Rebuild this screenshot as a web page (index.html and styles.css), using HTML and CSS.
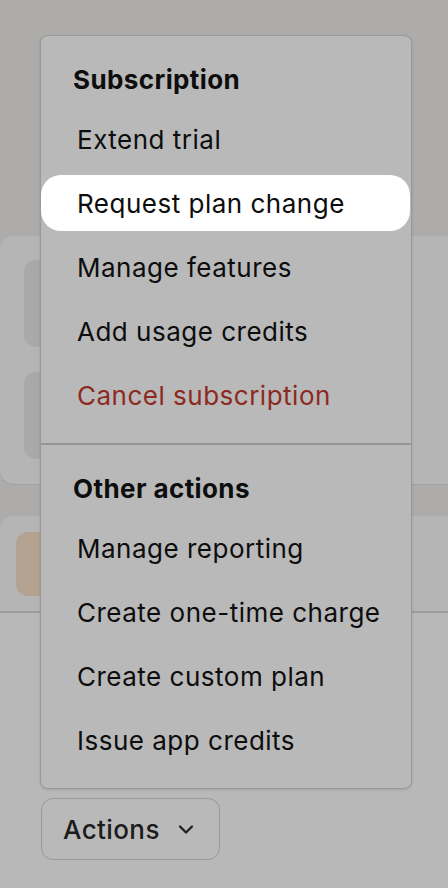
FILE: index.html
```html
<!DOCTYPE html>
<html>
  <head>
    <meta name="viewport" content="width=device-width, initial-scale=1.0">
    <title>Subscription actions</title>
    <link rel="stylesheet" href="styles.css">
  </head>
  <body>
    <div class="page">
      <div class="top-area"></div>

      <section class="card card-plan">
        <div class="block"></div>
        <div class="block"></div>
      </section>

      <section class="card card-notice">
        <div class="notice"></div>
      </section>

      <footer class="footer">
        <div class="actions">
          <div class="menu">
            <div class="menu-section">
              <p class="menu-heading">Subscription</p>
              <ul>
                <li class="menu-item">Extend trial</li>
                <li class="menu-item active">Request plan change</li>
                <li class="menu-item">Manage features</li>
                <li class="menu-item">Add usage credits</li>
                <li class="menu-item danger">Cancel subscription</li>
              </ul>
            </div>
            <div class="menu-section">
              <p class="menu-heading">Other actions</p>
              <ul>
                <li class="menu-item">Manage reporting</li>
                <li class="menu-item">Create one-time charge</li>
                <li class="menu-item">Create custom plan</li>
                <li class="menu-item">Issue app credits</li>
              </ul>
            </div>
          </div>
          <button class="actions-button">
            Actions
            <svg width="20" height="20" viewBox="0 0 20 20">
              <path d="M4 7.5l6 6 6-6" fill="none" stroke="#1c1c1c" stroke-width="2.2" stroke-linecap="round" stroke-linejoin="round"/>
            </svg>
          </button>
        </div>
      </footer>
    </div>
  </body>
</html>
```

FILE: styles.css
```css
body {
  margin: 0;
  padding: 0;
  background-color: #adacaa;
  font-family: Inter, "Noto Sans", sans-serif;
  overflow: hidden;
}
.page {
  width: 448px;
  height: 888px;
  overflow: hidden;
}
.top-area {
  height: 236px;
}
.card {
  background-color: #b5b5b5;
  border-radius: 14px 0 0 14px;
  margin-right: -20px;
  box-shadow: 0 1px 0 #a3a3a3;
}
.card-plan {
  height: 248px;
  padding: 24px 0 0 24px;
  box-sizing: border-box;
  display: flex;
  flex-direction: column;
  gap: 25px;
  margin-bottom: 32px;
}
.block {
  width: 120px;
  height: 87px;
  background-color: #aaa9a8;
  border-radius: 12px;
}
.card-notice {
  height: 97px;
  padding: 16px 0 0 16px;
  box-sizing: border-box;
  border-radius: 14px 0 0 0;
  border-bottom: 2px solid #9c9c9c;
  box-shadow: none;
}
.notice {
  width: 64px;
  height: 64px;
  background-color: #b3a390;
  border-radius: 12px;
}
.footer {
  background-color: #b8b8b8;
  height: 280px;
  padding: 185px 0 0 41px;
  box-sizing: border-box;
}
.actions {
  position: relative;
}
.menu {
  position: absolute;
  left: -1px;
  bottom: calc(100% + 9px);
  width: 372px;
  box-sizing: border-box;
  background-color: #b9b9b9;
  border: 1px solid #999;
  border-radius: 8px;
  box-shadow: 0 1px 3px rgba(0, 0, 0, 0.12);
}
.menu-section {
  padding: 30px 0 20px;
}
.menu-section + .menu-section {
  border-top: 2px solid #959595;
}
.menu-heading {
  margin: 0 0 17px 32px;
  font-size: 26px;
  line-height: 28px;
  font-weight: 700;
  letter-spacing: 0.4px;
  color: #0d0d0d;
}
ul {
  list-style: none;
  margin: 0;
  padding: 0;
  display: flex;
  flex-direction: column;
  gap: 8px;
}
.menu-item {
  height: 56px;
  padding-left: 36px;
  display: flex;
  align-items: center;
  font-size: 26px;
  letter-spacing: 0.5px;
  color: #0d0d0d;
  border-radius: 20px;
  margin-right: 1px;
}
.menu-item.active {
  background-color: #fff;
}
.menu-item.danger {
  color: #8c2a22;
}
.actions-button {
  display: flex;
  align-items: center;
  gap: 16px;
  width: 179px;
  height: 62px;
  padding: 0 0 0 21px;
  background-color: #b9b9b9;
  border: 1px solid #999;
  border-radius: 12px;
  font-family: Inter, "Noto Sans", sans-serif;
  font-size: 26px;
  font-weight: 500;
  letter-spacing: 0.4px;
  color: #1c1c1c;
}
```
